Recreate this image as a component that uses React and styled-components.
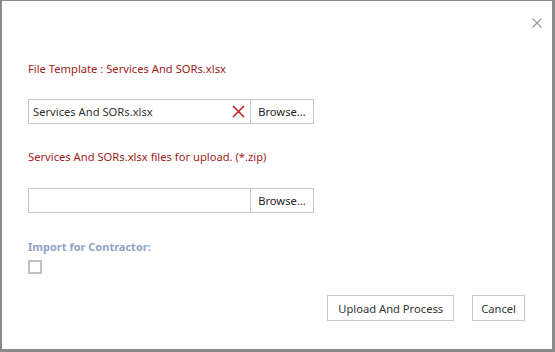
import styled, { createGlobalStyle } from 'styled-components';

const GlobalStyle = createGlobalStyle`
  html, body {
    margin: 0;
    padding: 0;
    background: #8a8a8a;
  }
  body {
    font-family: "Noto Sans", "Open Sans", sans-serif;
  }
`;

export default function App() {
  return (
    <>
      <GlobalStyle />
      <Modal>
        <Header>
          <CloseButton aria-label="Close">
            <svg width="10" height="10" viewBox="0 0 10 10">
              <path d="M0.5 0.5 L9.5 9.5 M9.5 0.5 L0.5 9.5" stroke="#9a9a9a" strokeWidth="1.1" fill="none" />
            </svg>
          </CloseButton>
        </Header>
        <Body>
          <Notice>File Template : Services And SORs.xlsx</Notice>
          <FileRow $top={22}>
            <FileField>
              <FileName>Services And SORs.xlsx</FileName>
              <ClearIcon aria-label="Clear">
                <svg width="13" height="13" viewBox="0 0 13 13">
                  <path d="M1 1 L12 12 M12 1 L1 12" stroke="#c0262c" strokeWidth="1.7" fill="none" />
                </svg>
              </ClearIcon>
            </FileField>
            <BrowseButton>Browse...</BrowseButton>
          </FileRow>
          <Notice $top={25}>Services And SORs.xlsx files for upload. (*.zip)</Notice>
          <FileRow $top={23}>
            <FileField />
            <BrowseButton>Browse...</BrowseButton>
          </FileRow>
          <FieldLabel>Import for Contractor:</FieldLabel>
          <CheckBox />
        </Body>
        <Footer>
          <ActionButton>Upload And Process</ActionButton>
          <ActionButton $pad={8}>Cancel</ActionButton>
        </Footer>
      </Modal>
    </>
  );
}

const Modal = styled.div`
  box-sizing: border-box;
  margin: 1px 3px 0 2px;
  height: 348px;
  background: #ffffff;
  display: flex;
  flex-direction: column;
`;

const Header = styled.div`
  display: flex;
  justify-content: flex-end;
  padding: 17px 10px 0 0;
  height: 28px;
  box-sizing: border-box;
`;

const CloseButton = styled.button`
  border: none;
  background: none;
  padding: 0;
  width: 10px;
  height: 10px;
  display: flex;
  cursor: pointer;
`;

const Body = styled.div`
  display: flex;
  flex-direction: column;
  align-items: flex-start;
  padding: 0 0 0 26px;
`;

const Notice = styled.div`
  margin-top: ${(p) => p.$top || 32}px;
  font-size: 11.2px;
  line-height: 16px;
  color: #a01c1c;
`;

const FileRow = styled.div`
  margin-top: ${(p) => p.$top}px;
  display: flex;
  height: 25px;
  border: 1px solid #c8c8c8;
  box-sizing: border-box;
  width: 286px;
`;

const FileField = styled.div`
  flex: 1;
  display: flex;
  align-items: center;
  padding: 0 4px;
  min-width: 0;
`;

const FileName = styled.span`
  flex: 1;
  font-size: 11.2px;
  color: #333;
`;

const ClearIcon = styled.span`
  display: flex;
  margin-right: 1px;
`;

const BrowseButton = styled.button`
  width: 63px;
  border: none;
  border-left: 1px solid #c8c8c8;
  background: #fff;
  font-family: inherit;
  font-size: 11.2px;
  color: #222;
  padding: 0;
`;

const FieldLabel = styled.div`
  margin-top: 26px;
  font-size: 11px;
  font-weight: 700;
  line-height: 16px;
  color: #8ea3c3;
`;

const CheckBox = styled.span`
  margin-top: 5px;
  width: 14px;
  height: 14px;
  box-sizing: border-box;
  border: 2px solid #c2c2c2;
  background: #fff;
`;

const Footer = styled.div`
  display: flex;
  justify-content: flex-end;
  gap: 18px;
  padding: 21px 27px 0 0;
`;

const ActionButton = styled.button`
  height: 26px;
  padding: 0 ${(p) => p.$pad || 10}px;
  border: 1px solid #c8c8c8;
  background: #fff;
  font-family: inherit;
  font-size: 11.2px;
  color: #333;
`;
